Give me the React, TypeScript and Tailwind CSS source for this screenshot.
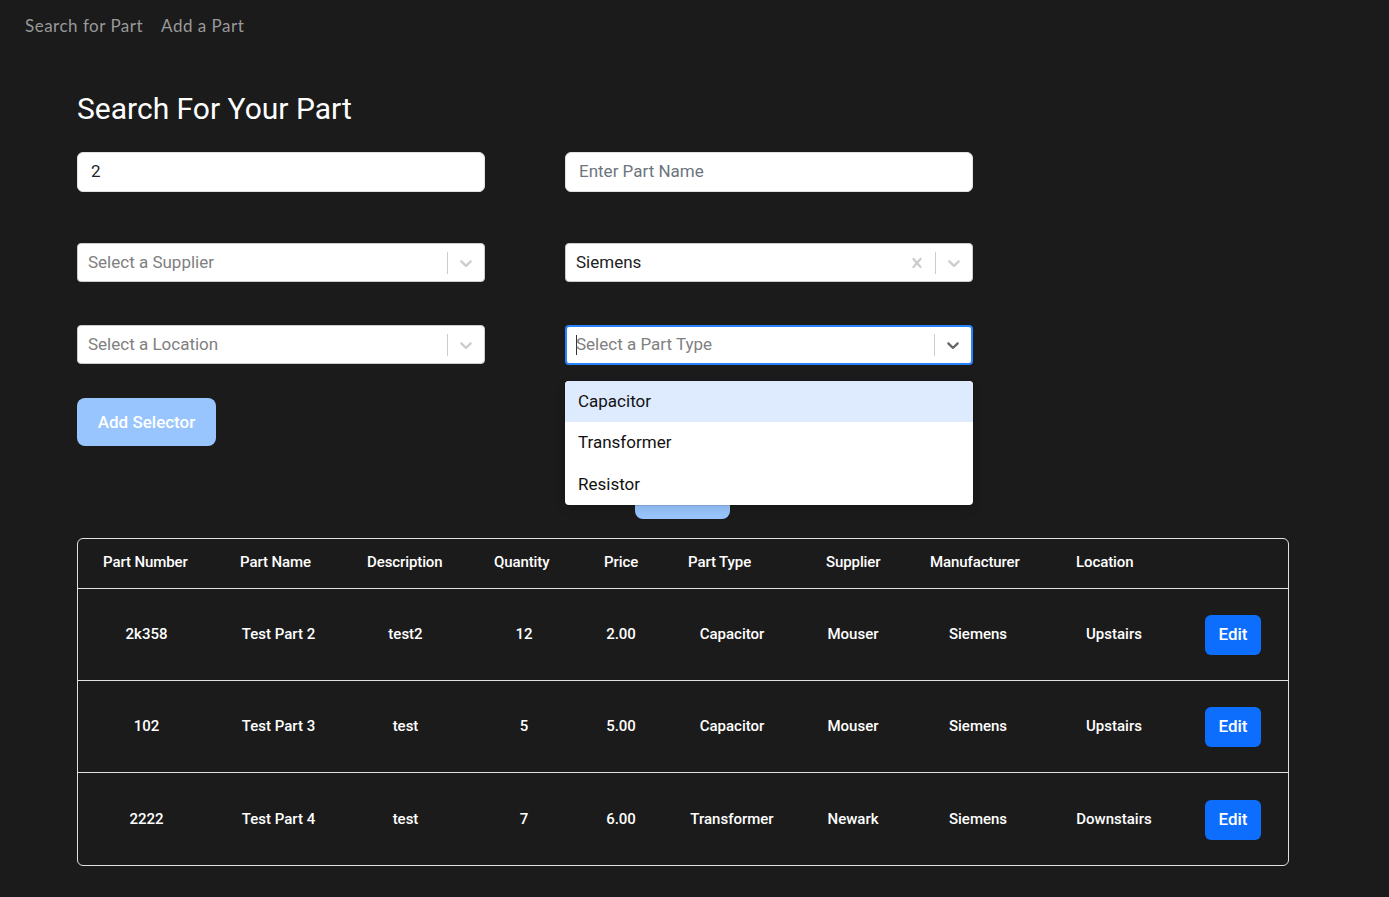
import React from "react";

const Chevron = ({ className }: { className: string }) => (
  <svg viewBox="0 0 20 20" width="20" height="20" className={className} fill="currentColor">
    <path d="M4.516 7.548c0.436-0.446 1.043-0.481 1.576 0l3.908 3.747 3.908-3.747c0.533-0.481 1.141-0.446 1.574 0 0.436 0.445 0.408 1.197 0 1.615-0.406 0.418-4.695 4.502-4.695 4.502-0.217 0.223-0.502 0.335-0.787 0.335s-0.57-0.112-0.789-0.335c0 0-4.287-4.084-4.695-4.502s-0.436-1.17 0-1.615z" />
  </svg>
);

const Cross = () => (
  <svg viewBox="0 0 20 20" width="20" height="20" className="text-[#cccccc]" fill="currentColor">
    <path d="M14.348 14.849c-0.469 0.469-1.229 0.469-1.697 0l-2.651-3.030-2.651 3.029c-0.469 0.469-1.229 0.469-1.697 0-0.469-0.469-0.469-1.229 0-1.697l2.758-3.15-2.759-3.152c-0.469-0.469-0.469-1.228 0-1.697s1.228-0.469 1.697 0l2.652 3.031 2.651-3.031c0.469-0.469 1.228-0.469 1.697 0s0.469 1.229 0 1.697l-2.758 3.152 2.758 3.15c0.469 0.469 0.469 1.229 0 1.698z" />
  </svg>
);

function Select({
  text,
  placeholder,
  clearable,
  focused,
}: {
  text: string;
  placeholder?: boolean;
  clearable?: boolean;
  focused?: boolean;
}) {
  return (
    <div
      className={
        focused
          ? "flex h-[40px] w-full items-center rounded-[4px] border-2 border-[#2684ff] bg-white"
          : "flex h-[39px] w-full items-center rounded-[4px] border border-[#cccccc] bg-white"
      }
    >
      <div className={focused ? "flex flex-1 items-center pl-[9px]" : "flex flex-1 items-center pl-[10px]"}>
        {focused && <span className="mr-[-1px] h-[20px] w-px bg-[#333]" />}
        <span className={placeholder ? "text-[17px] text-[#808080]" : "text-[17px] text-[#222]"}>{text}</span>
      </div>
      {clearable && (
        <div className="flex w-[36px] justify-center">
          <Cross />
        </div>
      )}
      <span className="h-[22px] w-px bg-[#cccccc]" />
      <div className="flex w-[36px] justify-center">
        <Chevron className={focused ? "text-[#666666]" : "text-[#cccccc]"} />
      </div>
    </div>
  );
}

const rows = [
  ["2k358", "Test Part 2", "test2", "12", "2.00", "Capacitor", "Mouser", "Siemens", "Upstairs"],
  ["102", "Test Part 3", "test", "5", "5.00", "Capacitor", "Mouser", "Siemens", "Upstairs"],
  ["2222", "Test Part 4", "test", "7", "6.00", "Transformer", "Newark", "Siemens", "Downstairs"],
];

const headers = [
  "Part Number",
  "Part Name",
  "Description",
  "Quantity",
  "Price",
  "Part Type",
  "Supplier",
  "Manufacturer",
  "Location",
  "",
];

const gridCols =
  "grid grid-cols-[137px_127px_127px_110px_84px_138px_104px_146px_126px_112px]";

export default function App() {
  return (
    <div className="min-h-screen bg-[#1b1b1b] font-['Roboto',sans-serif] text-white">
      <nav className="flex h-[52px] items-center gap-[18px] pl-[25px] font-['Lato',sans-serif] text-[17px] text-[#999999]">
        <span className="tracking-[0.5px]">Search for Part</span>
        <span className="tracking-[0.5px]">Add a Part</span>
      </nav>

      <main className="pl-[77px] pb-[31px]">
        <h2 className="mt-[38px] h-[38px] text-[30px] leading-[38px] font-normal">Search For Your Part</h2>

        <div className="mt-[24px] grid w-[896px] grid-cols-[408px_408px] gap-x-[80px]">
          <div className="flex h-[40px] items-center rounded-[6px] border border-[#dee2e6] bg-white px-[13px] text-[17px] text-[#212529]">
            2
          </div>
          <div className="flex h-[40px] items-center rounded-[6px] border border-[#dee2e6] bg-white px-[13px] text-[17px] text-[#6c757d]">
            Enter Part Name
          </div>
        </div>

        <div className="mt-[51px] grid w-[896px] grid-cols-[408px_408px] gap-x-[80px]">
          <Select text="Select a Supplier" placeholder />
          <Select text="Siemens" clearable />
        </div>

        <div className="mt-[43px] grid w-[896px] grid-cols-[408px_408px] gap-x-[80px]">
          <Select text="Select a Location" placeholder />
          <div className="relative">
            <Select text="Select a Part Type" placeholder focused />
            <div className="absolute top-[56px] left-0 z-10 w-full overflow-hidden rounded-[4px] bg-white text-[17px] text-[#111] shadow-[0_0_0_1px_rgba(0,0,0,0.1),0_4px_11px_rgba(0,0,0,0.1)]">
              <div className="flex h-[41px] items-center bg-[#deebff] pl-[13px]">Capacitor</div>
              <div className="flex h-[41px] items-center pl-[13px]">Transformer</div>
              <div className="flex h-[42px] items-center pl-[13px] pt-[1px]">Resistor</div>
            </div>
          </div>
        </div>

        <button className="mt-[33px] flex h-[48px] w-[139px] items-center justify-center rounded-[8px] bg-[#98c5fd] pt-[1px] text-[17px] font-medium text-white">
          Add Selector
        </button>

        <div className="mt-[25px] ml-[558px] h-[48px] w-[95px] rounded-[8px] bg-[#98c5fd]" />

        <div className="mt-[19px] w-[1212px] overflow-hidden rounded-[6px] border border-[#dee2e6]">
          <div className={`${gridCols} h-[50px] items-center border-b border-[#dee2e6] text-[15px] font-medium`}>
            {headers.map((h, i) => (
              <div key={i} className="pl-[25px] pb-[2px] whitespace-nowrap tracking-[-0.1px]">
                {h}
              </div>
            ))}
          </div>
          {rows.map((r, ri) => (
            <div
              key={ri}
              className={
                ri < rows.length - 1
                  ? `${gridCols} h-[92px] items-center border-b border-[#dee2e6] text-[15px] font-medium`
                  : `${gridCols} h-[92px] items-center pt-[1px] text-[15px] font-medium`
              }
            >
              {r.map((c, ci) => (
                <div key={ci} className="text-center whitespace-nowrap">
                  {c}
                </div>
              ))}
              <div className="flex justify-center">
                <button className="h-[40px] w-[56px] rounded-[6px] bg-[#0d6efd] text-[17px] text-white">
                  Edit
                </button>
              </div>
            </div>
          ))}
        </div>
      </main>
    </div>
  );
}
